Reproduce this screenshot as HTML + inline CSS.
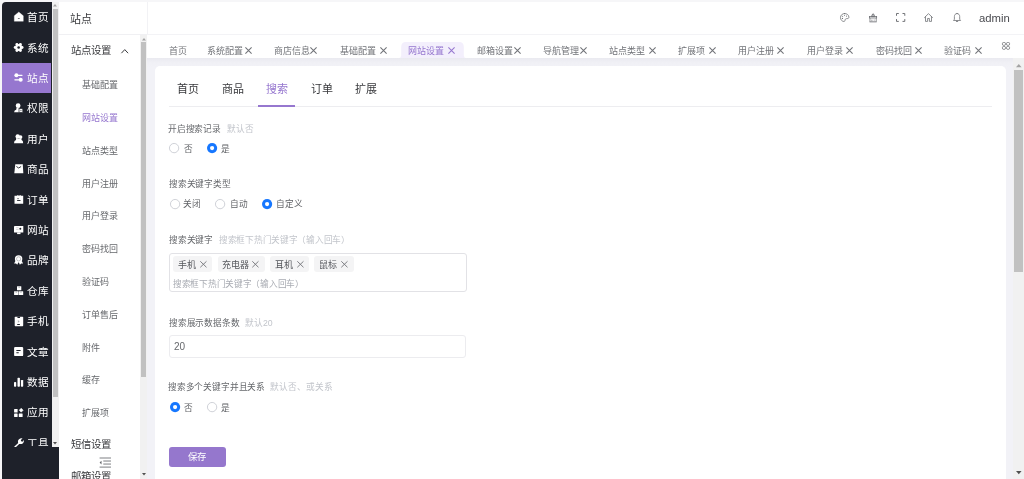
<!DOCTYPE html>
<html lang="zh-CN"><head><meta charset="utf-8">
<style>
*{box-sizing:border-box;margin:0;padding:0}
html,body{width:1024px;height:479px;overflow:hidden;background:#f6f6f8;font-family:"Liberation Sans",sans-serif;position:relative}
.a{position:absolute;white-space:nowrap;line-height:1;will-change:transform}
.b{position:absolute}
svg{position:absolute;overflow:visible}
</style></head><body>
<div class="b" style="left:1.6px;top:1.6px;width:57.1px;height:478px;background:#1e212a;border-top-left-radius:4px"></div>
<div class="b" style="left:1.6px;top:62.6px;width:49.9px;height:30.2px;background:#9677cf"></div>
<div class="b" style="left:1.6px;top:1.6px;width:49.6px;height:445.2px;overflow:hidden">
<div class="a" style="left:25.67px;top:10px;font-size:10.6px;color:#fff;">首页</div>
<div class="a" style="left:25.67px;top:41px;font-size:10.6px;color:#fff;">系统</div>
<div class="a" style="left:25.67px;top:71px;font-size:10.6px;color:#fff;">站点</div>
<div class="a" style="left:25.67px;top:101px;font-size:10.6px;color:#fff;">权限</div>
<div class="a" style="left:25.67px;top:132px;font-size:10.6px;color:#fff;">用户</div>
<div class="a" style="left:25.67px;top:162px;font-size:10.6px;color:#fff;">商品</div>
<div class="a" style="left:25.67px;top:193px;font-size:10.6px;color:#fff;">订单</div>
<div class="a" style="left:25.67px;top:223px;font-size:10.6px;color:#fff;">网站</div>
<div class="a" style="left:25.67px;top:253px;font-size:10.6px;color:#fff;">品牌</div>
<div class="a" style="left:25.67px;top:284px;font-size:10.6px;color:#fff;">仓库</div>
<div class="a" style="left:25.67px;top:314px;font-size:10.6px;color:#fff;">手机</div>
<div class="a" style="left:25.67px;top:345px;font-size:10.6px;color:#fff;">文章</div>
<div class="a" style="left:25.67px;top:375px;font-size:10.6px;color:#fff;">数据</div>
<div class="a" style="left:25.67px;top:405px;font-size:10.6px;color:#fff;">应用</div>
<div class="b" style="left:0;top:0;width:49.6px;height:444.1px;overflow:hidden"><div class="a" style="left:25.67px;top:436px;font-size:10.6px;color:#fff;">工具</div></div>
<svg style="left:-1.6px;top:-1.6px" width="1024" height="479" viewBox="0 0 1024 479"><g transform="translate(14 11.90)"><path d="M4.8 0.1L0.3 3.9V9.4H9.3V3.9Z" fill="#fff" stroke="#fff" stroke-width="0.3" stroke-linejoin="round"/><rect x="3.9" y="6.4" width="1.8" height="0.6" fill="#1e212a"/></g><g transform="translate(14 42.30)"><g fill="#fff"><circle cx="4.65" cy="5.2" r="3.4"/><circle cx="8.1" cy="5.2" r="1.45"/><circle cx="1.2" cy="5.2" r="1.45"/><circle cx="6.4" cy="2.2" r="1.45"/><circle cx="2.9" cy="2.2" r="1.45"/><circle cx="6.4" cy="8.2" r="1.45"/><circle cx="2.9" cy="8.2" r="1.45"/></g><circle cx="4.65" cy="5.2" r="1.3" fill="#1e212a"/></g><g transform="translate(14 72.70)"><g fill="#fff"><rect x="0.8" y="1.95" width="7.8" height="1.3" rx="0.6"/><rect x="0.3" y="6.45" width="7.8" height="1.3" rx="0.6"/><circle cx="2.4" cy="2.6" r="2"/><circle cx="6.7" cy="7.1" r="2"/></g></g><g transform="translate(14 103.10)"><g fill="#fff"><circle cx="4.1" cy="2.6" r="2.4"/><path d="M2.6 4.6L2.2 6.6Q0.3 7 0.1 9.2H9.2Q9 7 6.4 6.6L5.6 4.6Z"/></g><rect x="5" y="5.4" width="3.8" height="3.8" fill="#fff" stroke="#1e212a" stroke-width="0.7"/><rect x="6.1" y="6.8" width="1.6" height="1" fill="#1e212a" opacity="0.5"/></g><g transform="translate(14 133.50)"><g fill="#fff"><circle cx="6.5" cy="3.6" r="1.9"/><circle cx="3.7" cy="2.9" r="2.2"/><path d="M2.2 4.6L2 6.5Q0 6.9 0 9.7H9.2Q9.2 7.2 7.6 6.6L7.4 5.2H5.4Z"/></g></g><g transform="translate(14 163.90)"><path d="M1.3 0.4H8.8L9.3 9.3H0.3Z" fill="#fff"/><path d="M2.4 2.6Q4.6 5.6 7.1 2.6" stroke="#1e212a" stroke-width="0.9" fill="none"/></g><g transform="translate(14 194.30)"><path d="M0.5 1.5H2.8L3.3 1H4.3L4.8 1.5H5.2L5.7 1H6.7L7.2 1.5H9.2V9.4H0.5Z" fill="#fff"/><rect x="3.1" y="4" width="1.9" height="0.8" fill="#1e212a" opacity="0.7"/><rect x="3.1" y="5.8" width="3.4" height="0.9" fill="#1e212a"/></g><g transform="translate(14 224.70)"><rect x="0" y="1.3" width="9.3" height="6.6" rx="0.4" fill="#fff"/><rect x="3.1" y="7.7" width="3.4" height="1.7" fill="#fff"/><circle cx="6.3" cy="4" r="1" fill="#1e212a"/><rect x="2.2" y="2.9" width="2.4" height="0.5" fill="#1e212a" opacity="0.35"/><rect x="2.2" y="4.6" width="2.4" height="0.5" fill="#1e212a" opacity="0.35"/></g><g transform="translate(14 255.10)"><g fill="#fff"><circle cx="4.6" cy="3.8" r="3.7"/><path d="M1.4 5.8L0.1 8.4L2 8.3L3.3 9.6L4.4 7.2ZM7.8 5.8L9.1 8.4L7.2 8.3L5.9 9.6L4.8 7.2Z"/></g><circle cx="4.6" cy="3.8" r="2.1" fill="none" stroke="#1e212a" stroke-width="0.45" opacity="0.6"/></g><g transform="translate(14 285.50)"><g fill="#fff"><rect x="3" y="0.8" width="4.3" height="3.9" rx="0.3"/><rect x="0.1" y="5.7" width="4.4" height="3.9" rx="0.3"/><rect x="4.8" y="5.7" width="4.4" height="3.9" rx="0.3"/></g><g fill="#1e212a" opacity="0.6"><rect x="4.5" y="1.4" width="1.3" height="0.6"/><rect x="1.6" y="6.3" width="1.3" height="0.6"/><rect x="6.3" y="6.3" width="1.3" height="0.6"/></g></g><g transform="translate(14 315.90)"><rect x="0.7" y="0.9" width="8.5" height="9.4" rx="0.7" fill="#fff"/><path d="M3.3 0.9H6.2L5.9 2.1H3.6Z" fill="#1e212a"/><rect x="3.1" y="8.2" width="2.9" height="0.8" rx="0.3" fill="#1e212a"/><path d="M3.9 4.2L5.6 5.5L3.9 6.8Z" fill="#1e212a" opacity="0.35"/></g><g transform="translate(14 346.30)"><rect x="0.1" y="0.6" width="9.1" height="9.2" rx="1.2" fill="#fff"/><rect x="2.2" y="3.8" width="4.6" height="0.9" rx="0.4" fill="#1e212a"/><rect x="2.2" y="6" width="2.7" height="0.9" rx="0.4" fill="#1e212a"/></g><g transform="translate(14 376.70)"><g fill="#fff"><rect x="0" y="5.3" width="2.2" height="4.7" rx="0.7"/><rect x="3.5" y="1.1" width="2.4" height="8.9" rx="0.7"/><rect x="6.9" y="3.2" width="2.3" height="6.8" rx="0.7"/></g></g><g transform="translate(14 407.10)"><g fill="#fff"><rect x="0.1" y="2" width="3.5" height="3.3" rx="0.5"/><path d="M7.2 1.1L9.2 3.1L7.2 5.1L5.2 3.1Z" stroke="#fff" stroke-width="0.5" stroke-linejoin="round"/><rect x="0.1" y="6.4" width="3.5" height="3.5" rx="0.5"/><rect x="4.8" y="6.4" width="3.8" height="3.5" rx="0.5"/></g></g><g transform="translate(14 437.50)"><path d="M0.4 9.1L4.2 5.5Q3.4 3.2 5 1.7Q6.6 0.3 8.6 0.9L6.8 2.6L7.2 3.8L8.4 4.2L9.9 2.5Q10.2 4.6 8.7 5.9Q7.2 7 5.2 6.4L1.4 10.1Q0.5 10.4 0.2 9.9Z" fill="#fff"/></g></svg>
</div>
<div class="b" style="left:51.5px;top:1.6px;width:7.2px;height:445.2px;background:#f1f1f1"></div>
<div class="b" style="left:52.8px;top:9px;width:4.8px;height:388px;background:#c1c1c1"></div>
<svg style="left:53.30px;top:4.40px" width="4" height="2.4" viewBox="0 0 4 2.4"><path d="M0 2.4L2 0L4 2.4Z" fill="#a3a3a3"/></svg>
<svg style="left:53.30px;top:441.80px" width="4" height="2.4" viewBox="0 0 4 2.4"><path d="M0 0L2 2.4L4 0Z" fill="#505050"/></svg>
<div class="b" style="left:58.7px;top:1.6px;width:88.6px;height:478px;background:#fff"></div>
<div class="b" style="left:58.7px;top:33.7px;width:88.6px;height:0.8px;background:#f0f0f3"></div>
<div class="b" style="left:147.3px;top:1.6px;width:0.8px;height:32.8px;background:#f2f2f5"></div>
<div class="a" style="left:70.25px;top:14px;font-size:11px;color:#38393c;">站点</div>
<div class="a" style="left:70.78px;top:46px;font-size:10.4px;color:#38393c;">站点设置</div>
<svg style="left:120.90px;top:48.50px" width="7.5" height="4.6" viewBox="0 0 7.5 4.6"><path d="M0.4 4.2L3.75 0.6L7.1 4.2" stroke="#38393c" stroke-width="1" fill="none"/></svg>
<div class="a" style="left:81.85px;top:81px;font-size:9.0px;color:#66686c;">基础配置</div>
<div class="a" style="left:81.85px;top:114px;font-size:9.0px;color:#9677cf;">网站设置</div>
<div class="a" style="left:81.85px;top:147px;font-size:9.0px;color:#66686c;">站点类型</div>
<div class="a" style="left:81.85px;top:180px;font-size:9.0px;color:#66686c;">用户注册</div>
<div class="a" style="left:81.85px;top:212px;font-size:9.0px;color:#66686c;">用户登录</div>
<div class="a" style="left:81.85px;top:245px;font-size:9.0px;color:#66686c;">密码找回</div>
<div class="a" style="left:81.85px;top:278px;font-size:9.0px;color:#66686c;">验证码</div>
<div class="a" style="left:81.85px;top:311px;font-size:9.0px;color:#66686c;">订单售后</div>
<div class="a" style="left:81.85px;top:344px;font-size:9.0px;color:#66686c;">附件</div>
<div class="a" style="left:81.85px;top:376px;font-size:9.0px;color:#66686c;">缓存</div>
<div class="a" style="left:81.85px;top:409px;font-size:9.0px;color:#66686c;">扩展项</div>
<div class="a" style="left:70.68px;top:440px;font-size:10.4px;color:#38393c;">短信设置</div>
<svg style="left:99.00px;top:457.50px" width="12.5" height="9.6" viewBox="0 0 12.5 9.6"><path d="M0.6 0H12M4.3 3.03H12M4.3 6.06H12M0.6 9.1H12" stroke="#66686d" stroke-width="0.85"/><path d="M0.6 4.55L2.5 2.7V6.4Z" fill="#66686d"/></svg>
<div class="a" style="left:70.68px;top:472px;font-size:10.4px;color:#38393c;">邮箱设置</div>
<div class="b" style="left:140.3px;top:34.5px;width:6.6px;height:445px;background:#f1f1f1"></div>
<div class="b" style="left:141.2px;top:42.2px;width:4.8px;height:335px;background:#c1c1c1"></div>
<svg style="left:141.60px;top:37.50px" width="4" height="2.4" viewBox="0 0 4 2.4"><path d="M0 2.4L2 0L4 2.4Z" fill="#a3a3a3"/></svg>
<svg style="left:141.60px;top:473.30px" width="4" height="2.4" viewBox="0 0 4 2.4"><path d="M0 0L2 2.4L4 0Z" fill="#505050"/></svg>
<div class="b" style="left:148.1px;top:1.6px;width:876px;height:32.8px;background:#fff"></div>
<div class="b" style="left:147.3px;top:34px;width:877px;height:0.8px;background:#f3f3f6"></div>
<div class="a" style="left:979.0px;top:12.6px;font-size:11.3px;color:#4a4b50">admin</div>
<svg style="left:839.90px;top:13.30px" width="9.4" height="9" viewBox="0 0 9.4 9"><path d="M4.6 0.5C2.2 0.5 0.5 2.3 0.5 4.6S2.3 8.5 3.9 8.5C5 8.5 4.9 7.4 5.2 6.6C5.5 5.7 6.2 5.6 7 5.6C8.2 5.6 8.9 5.2 8.9 4.2C8.9 2 7 0.5 4.6 0.5Z" stroke="#707276" stroke-width="0.8" fill="none" stroke-linecap="round" stroke-linejoin="round"/><circle cx="2.6" cy="3.3" r="0.55" fill="#707276"/><circle cx="4.5" cy="2.3" r="0.55" fill="#707276"/><circle cx="6.5" cy="3.1" r="0.55" fill="#707276"/><circle cx="2.5" cy="5.4" r="0.55" fill="#707276"/></svg>
<svg style="left:868.50px;top:12.60px" width="8.4" height="9.6" viewBox="0 0 8.4 9.6"><path d="M2.5 3.6L3.6 1Q4.1 0.2 4.6 1L5.7 3.6Z" stroke="#707276" stroke-width="0.9" fill="#c9cacd" stroke-linejoin="round"/><rect x="0.55" y="3.55" width="7.1" height="1.45" stroke="#707276" stroke-width="0.8" fill="none"/><path d="M0.95 5V8.6M7.25 5V8.6M2.9 6.6V8.2M5.2 6.6V7.6" stroke="#707276" stroke-width="0.75" fill="none"/><path d="M0.5 8.85H7.7" stroke="#707276" stroke-width="0.9"/></svg>
<svg style="left:896.30px;top:13.00px" width="9.3" height="8.9" viewBox="0 0 9.3 8.9"><path d="M0.5 2.8V0.5H2.8M6.5 0.5H8.8V2.8M8.8 6.1V8.4H6.5M2.8 8.4H0.5V6.1" stroke="#707276" stroke-width="1" fill="none"/></svg>
<svg style="left:924.20px;top:13.00px" width="9" height="8.9" viewBox="0 0 9 8.9"><path d="M0.5 4.6L4.5 0.6L8.5 4.6M1.5 3.7V8.4H3.6V5.5H5.4V8.4H7.5V3.7" stroke="#707276" stroke-width="0.8" fill="none" stroke-linecap="round" stroke-linejoin="round"/></svg>
<svg style="left:952.90px;top:13.00px" width="8.1" height="8.9" viewBox="0 0 8.1 8.9"><path d="M4.05 0.5C2.3 0.5 1.4 1.9 1.4 3.6V6.3L0.5 7.5H7.6L6.7 6.3V3.6C6.7 1.9 5.8 0.5 4.05 0.5Z" stroke="#707276" stroke-width="0.8" fill="none" stroke-linecap="round" stroke-linejoin="round"/><path d="M3 8.4H5.1" stroke="#707276" stroke-width="0.9"/></svg>
<div class="b" style="left:147.3px;top:34.8px;width:877px;height:22.8px;background:#fff"></div>
<svg style="left:398.80px;top:41.70px" width="67" height="16.1" viewBox="0 0 67 16.1"><path d="M0 16.1Q2 16.1 2.2 13.5V4.8Q2.2 0 7 0H60Q64.8 0 64.8 4.8V13.5Q65 16.1 67 16.1Z" fill="#f3effc"/></svg>
<div class="a" style="left:168.55px;top:47px;font-size:9.0px;color:#717378;">首页</div>
<div class="a" style="left:207.45px;top:47px;font-size:9.0px;color:#717378;">系统配置</div>
<svg style="left:244.80px;top:46.90px" width="7" height="7" viewBox="0 0 7 7"><path d="M0.4 0.4L6.6 6.6M6.6 0.4L0.4 6.6" stroke="#717378" stroke-width="1.05"/></svg>
<div class="a" style="left:273.55px;top:47px;font-size:9.0px;color:#717378;">商店信息</div>
<svg style="left:309.60px;top:46.90px" width="7" height="7" viewBox="0 0 7 7"><path d="M0.4 0.4L6.6 6.6M6.6 0.4L0.4 6.6" stroke="#717378" stroke-width="1.05"/></svg>
<div class="a" style="left:339.55px;top:47px;font-size:9.0px;color:#717378;">基础配置</div>
<svg style="left:379.60px;top:46.90px" width="7" height="7" viewBox="0 0 7 7"><path d="M0.4 0.4L6.6 6.6M6.6 0.4L0.4 6.6" stroke="#717378" stroke-width="1.05"/></svg>
<div class="a" style="left:408.35px;top:47px;font-size:9.0px;color:#9677cf;">网站设置</div>
<svg style="left:447.90px;top:46.90px" width="7" height="7" viewBox="0 0 7 7"><path d="M0.4 0.4L6.6 6.6M6.6 0.4L0.4 6.6" stroke="#9677cf" stroke-width="1.05"/></svg>
<div class="a" style="left:476.85px;top:47px;font-size:9.0px;color:#717378;">邮箱设置</div>
<svg style="left:513.60px;top:46.90px" width="7" height="7" viewBox="0 0 7 7"><path d="M0.4 0.4L6.6 6.6M6.6 0.4L0.4 6.6" stroke="#717378" stroke-width="1.05"/></svg>
<div class="a" style="left:542.75px;top:47px;font-size:9.0px;color:#717378;">导航管理</div>
<svg style="left:580.20px;top:46.90px" width="7" height="7" viewBox="0 0 7 7"><path d="M0.4 0.4L6.6 6.6M6.6 0.4L0.4 6.6" stroke="#717378" stroke-width="1.05"/></svg>
<div class="a" style="left:609.25px;top:47px;font-size:9.0px;color:#717378;">站点类型</div>
<svg style="left:648.60px;top:46.90px" width="7" height="7" viewBox="0 0 7 7"><path d="M0.4 0.4L6.6 6.6M6.6 0.4L0.4 6.6" stroke="#717378" stroke-width="1.05"/></svg>
<div class="a" style="left:678.15px;top:47px;font-size:9.0px;color:#717378;">扩展项</div>
<svg style="left:708.80px;top:46.90px" width="7" height="7" viewBox="0 0 7 7"><path d="M0.4 0.4L6.6 6.6M6.6 0.4L0.4 6.6" stroke="#717378" stroke-width="1.05"/></svg>
<div class="a" style="left:737.95px;top:47px;font-size:9.0px;color:#717378;">用户注册</div>
<svg style="left:777.20px;top:46.90px" width="7" height="7" viewBox="0 0 7 7"><path d="M0.4 0.4L6.6 6.6M6.6 0.4L0.4 6.6" stroke="#717378" stroke-width="1.05"/></svg>
<div class="a" style="left:806.75px;top:47px;font-size:9.0px;color:#717378;">用户登录</div>
<svg style="left:846.20px;top:46.90px" width="7" height="7" viewBox="0 0 7 7"><path d="M0.4 0.4L6.6 6.6M6.6 0.4L0.4 6.6" stroke="#717378" stroke-width="1.05"/></svg>
<div class="a" style="left:875.55px;top:47px;font-size:9.0px;color:#717378;">密码找回</div>
<svg style="left:914.80px;top:46.90px" width="7" height="7" viewBox="0 0 7 7"><path d="M0.4 0.4L6.6 6.6M6.6 0.4L0.4 6.6" stroke="#717378" stroke-width="1.05"/></svg>
<div class="a" style="left:944.35px;top:47px;font-size:9.0px;color:#717378;">验证码</div>
<svg style="left:975.20px;top:46.90px" width="7" height="7" viewBox="0 0 7 7"><path d="M0.4 0.4L6.6 6.6M6.6 0.4L0.4 6.6" stroke="#717378" stroke-width="1.05"/></svg>
<svg style="left:1001.80px;top:42.00px" width="8" height="7.8" viewBox="0 0 8 7.8"><rect x="0.4" y="0.4" width="3.1" height="3" rx="1.3" stroke="#707276" stroke-width="0.8" fill="none"/><rect x="0.4" y="4.4" width="3.1" height="3" rx="1.3" stroke="#707276" stroke-width="0.8" fill="none"/><rect x="4.5" y="0.4" width="3.1" height="3" rx="1.3" stroke="#707276" stroke-width="0.8" fill="none"/><rect x="4.5" y="4.4" width="3.1" height="3" rx="1.3" stroke="#707276" stroke-width="0.8" fill="none"/></svg>
<div class="b" style="left:147.3px;top:57.6px;width:877px;height:422px;background:linear-gradient(#eaeaf0 0px,#f0f0f5 4px,#f2f2f7 9px)"></div>
<div class="b" style="left:154.8px;top:65.7px;width:851.2px;height:420px;background:#fff;border-radius:5px"></div>
<div class="b" style="left:1012.8px;top:57.6px;width:11.2px;height:422px;background:#f1f1f1"></div>
<div class="b" style="left:1014px;top:69.8px;width:8.8px;height:202.7px;background:#c1c1c1"></div>
<svg style="left:1015.60px;top:63.60px" width="5.6" height="3.2" viewBox="0 0 5.6 3.2"><path d="M0 3.2L2.8 0L5.6 3.2Z" fill="#a3a3a3"/></svg>
<svg style="left:1015.60px;top:471.20px" width="5.6" height="3.2" viewBox="0 0 5.6 3.2"><path d="M0 0L2.8 3.2L5.6 0Z" fill="#505050"/></svg>
<div class="a" style="left:177.35px;top:84px;font-size:11px;color:#38393c;">首页</div>
<div class="a" style="left:221.75px;top:84px;font-size:11px;color:#38393c;">商品</div>
<div class="a" style="left:266.15px;top:84px;font-size:11px;color:#9677cf;">搜索</div>
<div class="a" style="left:310.55px;top:84px;font-size:11px;color:#38393c;">订单</div>
<div class="a" style="left:354.95px;top:84px;font-size:11px;color:#38393c;">扩展</div>
<div class="b" style="left:169px;top:105.8px;width:823px;height:0.8px;background:#ededf0"></div>
<div class="b" style="left:258px;top:104.9px;width:37px;height:1.7px;background:#9677cf"></div>
<div class="a" style="left:168.47px;top:125px;font-size:8.7px;color:#66686c;letter-spacing:-0.18px">开启搜索记录</div>
<div class="a" style="left:227.26px;top:125px;font-size:8.7px;color:#c2c5cb;">默认否</div>
<svg style="left:169.25px;top:143.05px" width="10.2" height="10.2" viewBox="0 0 10.2 10.2"><circle cx="5.1" cy="5.1" r="4.65" fill="#fff" stroke="#c9ccd3" stroke-width="0.9"/></svg>
<div class="a" style="left:183.56px;top:145px;font-size:8.7px;color:#606266;">否</div>
<svg style="left:207.05px;top:143.05px" width="10.2" height="10.2" viewBox="0 0 10.2 10.2"><circle cx="5.1" cy="5.1" r="5.1" fill="#1677ff"/><circle cx="5.1" cy="5.1" r="2.1" fill="#fff"/></svg>
<div class="a" style="left:220.87px;top:145px;font-size:8.7px;color:#606266;">是</div>
<div class="a" style="left:168.56px;top:180px;font-size:8.7px;color:#66686c;letter-spacing:-0.18px">搜索关键字类型</div>
<svg style="left:169.65px;top:198.50px" width="10.2" height="10.2" viewBox="0 0 10.2 10.2"><circle cx="5.1" cy="5.1" r="4.65" fill="#fff" stroke="#c9ccd3" stroke-width="0.9"/></svg>
<div class="a" style="left:183.47px;top:200px;font-size:8.7px;color:#606266;">关闭</div>
<svg style="left:215.45px;top:198.50px" width="10.2" height="10.2" viewBox="0 0 10.2 10.2"><circle cx="5.1" cy="5.1" r="4.65" fill="#fff" stroke="#c9ccd3" stroke-width="0.9"/></svg>
<div class="a" style="left:229.56px;top:200px;font-size:8.7px;color:#606266;">自动</div>
<svg style="left:261.55px;top:198.50px" width="10.2" height="10.2" viewBox="0 0 10.2 10.2"><circle cx="5.1" cy="5.1" r="5.1" fill="#1677ff"/><circle cx="5.1" cy="5.1" r="2.1" fill="#fff"/></svg>
<div class="a" style="left:275.67px;top:200px;font-size:8.7px;color:#606266;">自定义</div>
<div class="a" style="left:168.97px;top:236px;font-size:8.7px;color:#66686c;letter-spacing:-0.18px">搜索关键字</div>
<div class="a" style="left:219.16px;top:236px;font-size:8.7px;color:#c2c5cb;letter-spacing:-0.28px">搜索框下热门关键字（输入回车）</div>
<div class="b" style="left:168.6px;top:253px;width:298.1px;height:39.3px;border:0.8px solid #e2e2e6;border-radius:3px"></div>
<div class="b" style="left:172.9px;top:255.9px;width:39.30px;height:16.4px;background:#f4f4f5;border-radius:3px"></div>
<div class="a" style="left:177.55px;top:261px;font-size:9.0px;color:#55575c;">手机</div>
<svg style="left:200.00px;top:260.70px" width="6.8" height="6.6" viewBox="0 0 6.8 6.6"><path d="M0.3 0.3L6.5 6.3M6.5 0.3L0.3 6.3" stroke="#76787d" stroke-width="0.95"/></svg>
<div class="b" style="left:217.8px;top:255.9px;width:46.90px;height:16.4px;background:#f4f4f5;border-radius:3px"></div>
<div class="a" style="left:221.95px;top:261px;font-size:9.0px;color:#55575c;">充电器</div>
<svg style="left:252.30px;top:260.70px" width="6.8" height="6.6" viewBox="0 0 6.8 6.6"><path d="M0.3 0.3L6.5 6.3M6.5 0.3L0.3 6.3" stroke="#76787d" stroke-width="0.95"/></svg>
<div class="b" style="left:270.4px;top:255.9px;width:39.00px;height:16.4px;background:#f4f4f5;border-radius:3px"></div>
<div class="a" style="left:275.05px;top:261px;font-size:9.0px;color:#55575c;">耳机</div>
<svg style="left:296.60px;top:260.70px" width="6.8" height="6.6" viewBox="0 0 6.8 6.6"><path d="M0.3 0.3L6.5 6.3M6.5 0.3L0.3 6.3" stroke="#76787d" stroke-width="0.95"/></svg>
<div class="b" style="left:314.3px;top:255.9px;width:39.45px;height:16.4px;background:#f4f4f5;border-radius:3px"></div>
<div class="a" style="left:318.95px;top:261px;font-size:9.0px;color:#55575c;">鼠标</div>
<svg style="left:340.90px;top:260.70px" width="6.8" height="6.6" viewBox="0 0 6.8 6.6"><path d="M0.3 0.3L6.5 6.3M6.5 0.3L0.3 6.3" stroke="#76787d" stroke-width="0.95"/></svg>
<div class="a" style="left:172.87px;top:280px;font-size:8.7px;color:#a8abb2;letter-spacing:-0.28px">搜索框下热门关键字（输入回车）</div>
<div class="a" style="left:168.87px;top:319px;font-size:8.7px;color:#66686c;letter-spacing:-0.18px">搜索展示数据条数</div>
<div class="a" style="left:244.56px;top:319px;font-size:8.7px;color:#c2c5cb;">默认20</div>
<div class="b" style="left:169.3px;top:335.3px;width:297.2px;height:22.3px;border:0.8px solid #ececef;border-radius:3px"></div>
<div class="a" style="left:173.5px;top:342px;font-size:10px;color:#66686c">20</div>
<div class="a" style="left:168.37px;top:383px;font-size:8.7px;color:#66686c;letter-spacing:-0.18px">搜索多个关键字并且关系</div>
<div class="a" style="left:270.17px;top:383px;font-size:8.7px;color:#c2c5cb;">默认否、或关系</div>
<svg style="left:169.75px;top:402.30px" width="10.2" height="10.2" viewBox="0 0 10.2 10.2"><circle cx="5.1" cy="5.1" r="5.1" fill="#1677ff"/><circle cx="5.1" cy="5.1" r="2.1" fill="#fff"/></svg>
<div class="a" style="left:183.66px;top:404px;font-size:8.7px;color:#606266;">否</div>
<svg style="left:206.80px;top:402.30px" width="10.2" height="10.2" viewBox="0 0 10.2 10.2"><circle cx="5.1" cy="5.1" r="4.65" fill="#fff" stroke="#c9ccd3" stroke-width="0.9"/></svg>
<div class="a" style="left:220.56px;top:404px;font-size:8.7px;color:#606266;">是</div>
<div class="b" style="left:168.8px;top:447.2px;width:57.4px;height:19.8px;background:#9577cd;border-radius:3px"></div>
<div class="a" style="left:188.33px;top:452px;font-size:9.4px;color:#fff;">保存</div>
</body></html>
